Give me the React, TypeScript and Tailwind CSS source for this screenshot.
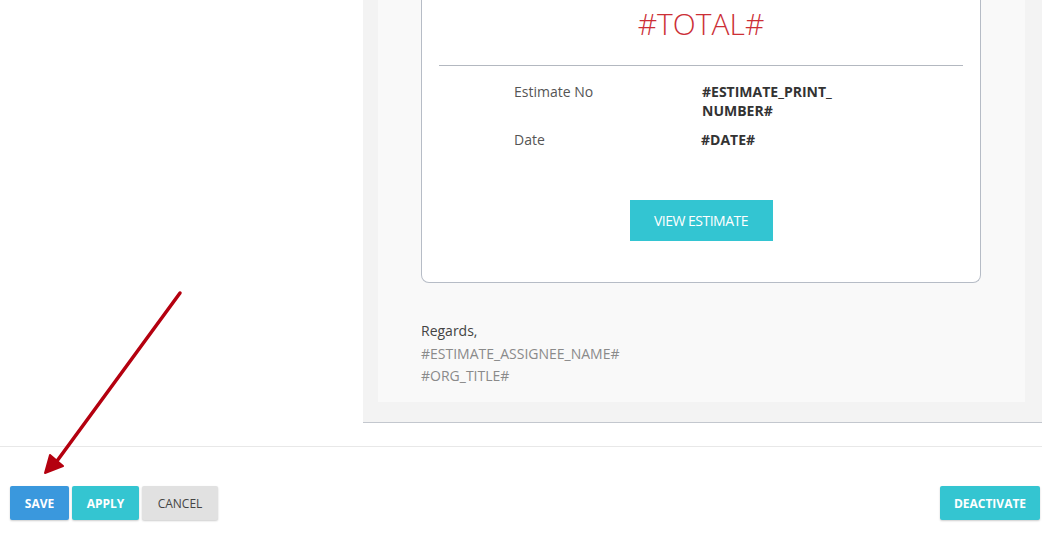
import React from "react";

export default function App() {
  const font = { fontFamily: '"Open Sans", "Noto Sans", sans-serif' };
  const btn = "h-[34px] pt-[2px] flex items-center justify-center rounded-[2px] text-[12px] shadow-[0_1px_2px_rgba(0,0,0,0.2)]";
  return (
    <div className="relative w-[1042px] h-[533px] bg-white overflow-hidden" style={font}>
      <div className="flex">
        <div className="w-[363px] shrink-0" />
        <div className="flex-1 bg-[#f3f3f3] pl-[15px] pr-[17px] pb-[20px] border-b border-[#c3c7ce]">
          <div className="bg-[#f9f9f9] pl-[43px] pr-[44px] pb-[14px]">
            <div className="bg-white border-x border-b border-[#b6bcc6] rounded-b-[8px] px-[17px] pb-[41px]">
              <div className="pt-[4px] h-[44px] text-center text-[30px] leading-[40px] font-light text-[#cc2f36]">
                #TOTAL#
              </div>
              <div className="mt-[21px] h-px bg-[#b3b8c0]" />
              <div className="pl-[75px] pt-[16px] text-[14px] leading-[19px]">
                <div className="flex">
                  <div className="w-[188px] text-[#555]">Estimate No</div>
                  <div className="w-[135px] break-all font-bold text-[#333]">#ESTIMATE_PRINT_NUMBER#</div>
                </div>
                <div className="flex mt-[10px]">
                  <div className="w-[187px] text-[#555]">Date</div>
                  <div className="font-bold text-[#333]">#DATE#</div>
                </div>
              </div>
              <div className="mt-[51px] flex justify-center">
                <div className="w-[143px] h-[41px] flex items-center justify-center bg-[#33c5d2] text-white text-[14px] font-medium tracking-[-0.5px]">
                  VIEW ESTIMATE
                </div>
              </div>
            </div>
            <div className="mt-[37px] text-[14px] leading-[22.5px]">
              <div className="text-[#444]">Regards,</div>
              <div className="text-[#8a8a8a]">#ESTIMATE_ASSIGNEE_NAME#</div>
              <div className="text-[#8a8a8a]">#ORG_TITLE#</div>
            </div>
          </div>
        </div>
      </div>
      <div className="mt-[23px] h-px bg-[#e8e8e8]" />
      <div className="mt-[39px] flex items-center justify-between pl-[10px] pr-[2px]">
        <div className="flex gap-[3px]">
          <div className={`${btn} w-[59px] bg-[#3a98dd] text-white font-bold`}>SAVE</div>
          <div className={`${btn} w-[67px] bg-[#34c5d1] text-white font-bold`}>APPLY</div>
          <div className={`${btn} w-[76px] bg-[#e1e1e1] text-[#444]`}>CANCEL</div>
        </div>
        <div className={`${btn} w-[100px] bg-[#34c5d1] text-white font-bold`}>DEACTIVATE</div>
      </div>
      <svg className="absolute left-0 top-0 pointer-events-none" width="1042" height="533">
        <path d="M180 293 L57 461" stroke="#b4000f" strokeWidth="3.5" strokeLinecap="round" />
        <path d="M45 473 L50 455 L63 466 Z" fill="#b4000f" stroke="#b4000f" strokeWidth="2" strokeLinejoin="round" />
      </svg>
    </div>
  );
}
